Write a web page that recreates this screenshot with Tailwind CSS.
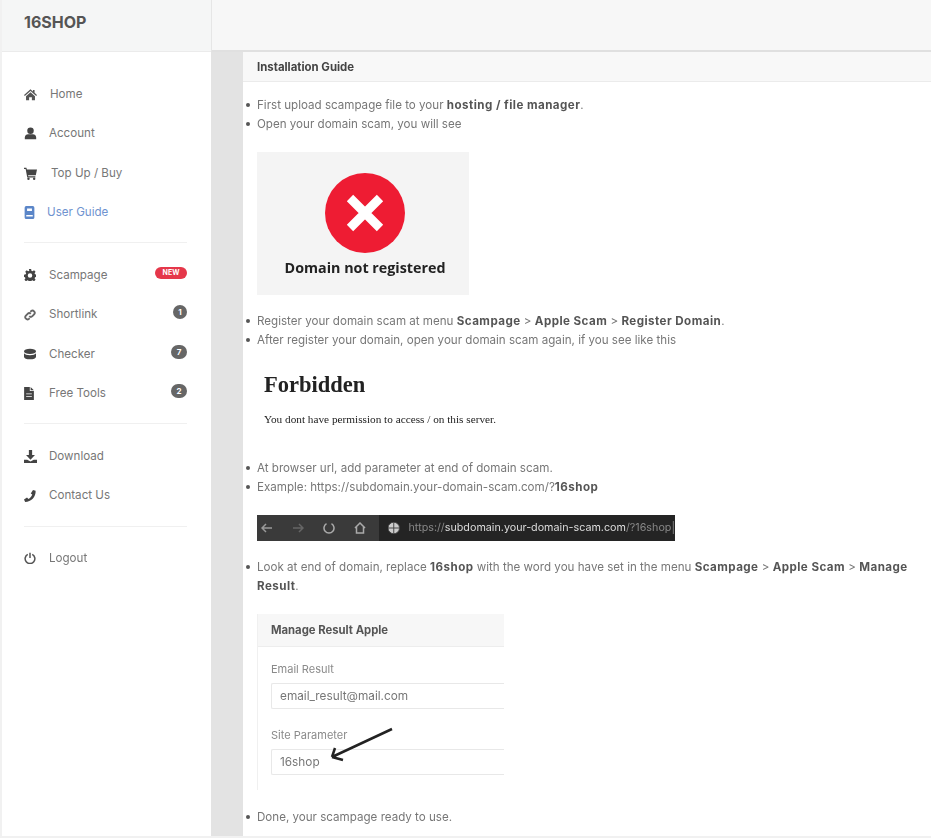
<!DOCTYPE html>
<html lang="en">
<head>
    <meta charset="UTF-8">
    <meta name="viewport" content="width=device-width, initial-scale=1.0">
    <title>16SHOP</title>
    <script src="https://cdn.jsdelivr.net/npm/@tailwindcss/browser@4"></script>
</head>
<body class="bg-[#f1f1f1] text-[#777] h-[838px] overflow-hidden font-['Inter','Liberation_Sans',sans-serif] text-[11.600px]">
    <div class="flex h-[838px] pl-[2px] pb-[2px] blur-[0.7px]">
        <!-- Sidebar -->
        <aside class="w-[209px] shrink-0 bg-white flex flex-col">
            <div class="h-[52px] shrink-0 bg-[#f5f6f6] border-b border-[#ebebeb] pl-[22px] pt-[12px] text-[16px] leading-[20px] font-bold text-[#555]">16SHOP</div>
            <nav class="pl-[22px] pr-[24px] pt-[22.500px]">
                <a class="flex items-center h-[39.5px]">
                    <svg class="w-[13px] h-[13px] mr-[13px] fill-[#555]" viewBox="0 0 16 16"><path d="M8 1.500 0 8.500l1 1.200 7-6 7 6 1-1.200-3-2.600V2.500h-2v1.700z"/><path d="M2.500 10 8 5.200l5.500 4.800v5H9.700v-3.500H6.300V15H2.500z"/></svg>
                    <span>Home</span>
                </a>
                <a class="flex items-center h-[39.5px]">
                    <svg class="w-[13px] h-[13px] mr-[12px] fill-[#444]" viewBox="0 0 16 16"><circle cx="8" cy="4.500" r="4"/><path d="M1 15v-2c0-2.500 2-4 4-4h6c2 0 4 1.500 4 4v2z"/></svg>
                    <span>Account</span>
                </a>
                <a class="flex items-center h-[39.5px]">
                    <svg class="w-[13px] h-[13px] mr-[14px] fill-[#444]" viewBox="0 0 16 16"><path d="M0 1h3l.5 2H16l-1.500 7H5l.3 1.500H14V13H4L2 2.500H0z"/><circle cx="5.500" cy="14.500" r="1.500"/><circle cx="12.500" cy="14.500" r="1.500"/></svg>
                    <span>Top Up / Buy</span>
                </a>
                <a class="flex items-center h-[39.5px] text-[#6f93cf]">
                    <svg class="w-[11px] h-[13px] mr-[12px] fill-[#5b86c8]" viewBox="0 0 12 16"><path d="M2 0h8a2 2 0 0 1 2 2v12a2 2 0 0 1-2 2H2a2 2 0 0 1-2-2V2a2 2 0 0 1 2-2zm1 3v3h6V3zm-1 8v2h8v-2z"/></svg>
                    <span>User Guide</span>
                </a>
                <div class="border-t border-[#f0f0f0] mt-[9px] mb-[13px]"></div>
                <a class="flex items-center h-[39.5px]">
                    <svg class="w-[12px] h-[12px] mr-[13px] fill-[#444]" viewBox="0 0 16 16"><path fill-rule="evenodd" d="M6.500 0h3l.4 2.300 1.500.6 2-1.300 2 2-1.300 2 .6 1.500 2.300.4v3l-2.300.4-.6 1.500 1.300 2-2 2-2-1.300-1.500.6-.4 2.300h-3l-.4-2.300-1.500-.6-2 1.300-2-2 1.300-2-.6-1.500L0 10.500v-3l2.300-.4.6-1.500-1.300-2 2-2 2 1.300 1.500-.6zM8 5.500a3 3 0 1 0 0 6 3 3 0 0 0 0-6z"/></svg>
                    <span class="flex-1">Scampage</span>
                    <span class="w-[32px] h-[12px] -mt-[5px] rounded-full bg-[#e5374a] text-white text-[7px] font-bold leading-[12px] text-center">NEW</span>
                </a>
                <a class="flex items-center h-[39.5px]">
                    <svg class="w-[12px] h-[12px] mr-[13px] fill-none stroke-[#666] stroke-[2.500]" viewBox="0 0 16 16"><path d="M7 9.500a3 3 0 0 0 4.200 0l2.500-2.500A3 3 0 0 0 9.500 2.800L8.500 3.800M9 6.500a3 3 0 0 0-4.200 0L2.300 9a3 3 0 0 0 4.200 4.200l1-1"/></svg>
                    <span class="flex-1">Shortlink</span>
                    <span class="w-[14px] h-[14px] -mt-[5px] rounded-full bg-[#666] text-white text-[8px] font-bold leading-[14px] text-center">1</span>
                </a>
                <a class="flex items-center h-[39.5px]">
                    <svg class="w-[12px] h-[12px] mr-[13px] fill-[#444]" viewBox="0 0 16 16"><ellipse cx="8" cy="4.500" rx="8" ry="3.500"/><path d="M0 7c1 1.700 4 2.500 8 2.500S15 8.700 16 7v4.500C16 13.500 12.500 15 8 15s-8-1.500-8-3.500z"/></svg>
                    <span class="flex-1">Checker</span>
                    <span class="w-[16px] h-[14px] -mt-[5px] rounded-full bg-[#666] text-white text-[8px] font-bold leading-[14px] text-center">7</span>
                </a>
                <a class="flex items-center h-[39.5px]">
                    <svg class="w-[10px] h-[13px] mr-[15px] fill-[#444]" viewBox="0 0 12 16"><path fill-rule="evenodd" d="M0 0h7v5h5v11H0zM8 0l4 4H8zM2.500 8v1h7V8zm0 3v1h7v-1z"/></svg>
                    <span class="flex-1">Free Tools</span>
                    <span class="w-[16px] h-[14px] -mt-[5px] rounded-full bg-[#666] text-white text-[8px] font-bold leading-[14px] text-center">2</span>
                </a>
                <div class="border-t border-[#f0f0f0] mt-[9.500px] mb-[12.500px]"></div>
                <a class="flex items-center h-[39.5px]">
                    <svg class="w-[13px] h-[13px] mr-[12px] fill-[#444]" viewBox="0 0 16 16"><path d="M6 0h4v6h3.500L8 12 2.500 6H6zM0 12h4l4 2 4-2h4v4H0z"/></svg>
                    <span>Download</span>
                </a>
                <a class="flex items-center h-[39.5px]">
                    <svg class="w-[12px] h-[12px] mr-[13px] fill-[#444]" viewBox="0 0 16 16"><path d="M12 0l3.500 1c.5 8-6 15-14 15L0 12.500 4 10l2 2c2-1 4-3.500 5-6L9 4.500z"/></svg>
                    <span>Contact Us</span>
                </a>
                <div class="border-t border-[#f0f0f0] mt-[10px] mb-[12px]"></div>
                <a class="flex items-center h-[39.5px]">
                    <svg class="w-[12px] h-[12px] mr-[13px] fill-none stroke-[#555] stroke-2" viewBox="0 0 16 16"><path d="M5 3.200a6.500 6.500 0 1 0 6 0M8 1v7"/></svg>
                    <span>Logout</span>
                </a>
            </nav>
        </aside>

        <!-- Main -->
        <main class="flex-1 flex flex-col min-w-0">
            <div class="h-[52px] shrink-0 bg-[#f7f7f7] border-l border-b-2 border-l-[#e6e6e6] border-b-[#e0e0e0]"></div>
            <div class="flex-1 flex min-h-0">
                <div class="w-[32px] shrink-0 bg-[#e3e3e3]"></div>
                <section class="flex-1 bg-white min-w-0">
                    <div class="h-[30px] bg-[#f8f8f8] border-b border-[#ebebeb] pl-[14px] leading-[30px] text-[11.400px] font-bold text-[#444]">Installation Guide</div>
                    <div class="pl-[14px] pr-[20px] pt-[13.500px] leading-[19px] [&_li]:relative [&_li]:before:absolute [&_li]:before:left-[-11px] [&_li]:before:top-[7px] [&_li]:before:size-[4px] [&_li]:before:rounded-full [&_li]:before:bg-[#555] [&_b]:text-[#555] [&_b]:tracking-[0.45px]">
                        <ul>
                            <li>First upload scampage file to your <b>hosting / file manager</b>.</li>
                            <li>Open your domain scam, you will see</li>
                        </ul>
                        <div class="w-[212px] h-[143px] mt-[18px] pl-[4px] bg-[#f4f4f4] flex flex-col items-center">
                            <div class="w-[80px] h-[80px] mt-[21px] rounded-full bg-[#ee1c33] flex items-center justify-center">
                                <svg class="w-[42px] h-[42px] stroke-white stroke-[9]" viewBox="0 0 42 42"><path d="M6 6l30 30M36 6 6 36"/></svg>
                            </div>
                            <p class="mt-[3px] font-['Open_Sans',sans-serif] font-bold text-[14.300px] leading-[24px] text-[#222]">Domain not registered</p>
                        </div>
                        <ul class="mt-[17px]">
                            <li>Register your domain scam at menu <b>Scampage</b> &gt; <b>Apple Scam</b> &gt; <b>Register Domain</b>.</li>
                            <li>After register your domain, open your domain scam again, if you see like this</li>
                        </ul>
                        <div class="pl-[7px] h-[109px] font-['Liberation_Serif',serif] text-[#222]">
                            <h2 class="pt-[21px] text-[22.500px] leading-[28px] font-bold">Forbidden</h2>
                            <p class="mt-[13px] text-[11.250px] leading-[14px]">You dont have permission to access / on this server.</p>
                        </div>
                        <ul>
                            <li>At browser url, add parameter at end of domain scam.</li>
                            <li>Example: https://subdomain.your-domain-scam.com/?<b>16shop</b></li>
                        </ul>
                        <div class="w-[418px] h-[26px] mt-[18px] bg-[#242424] flex items-center text-[#888] overflow-hidden">
                            <div class="w-[122px] h-full bg-[#3a3a3a] flex items-center gap-[19px] pl-[4px] shrink-0">
                                <svg class="w-[12px] h-[12px] fill-none stroke-[#999] stroke-[1.500]" viewBox="0 0 12 12"><path d="M11 6H1m4-4L1 6l4 4"/></svg>
                                <svg class="w-[12px] h-[12px] fill-none stroke-[#666] stroke-[1.500]" viewBox="0 0 12 12"><path d="M1 6h10M7 2l4 4-4 4"/></svg>
                                <svg class="w-[12px] h-[12px] fill-none stroke-[#aaa] stroke-[1.500]" viewBox="0 0 12 12"><path d="M8.500 1.700a5 5 0 1 1-5 0"/></svg>
                                <svg class="w-[12px] h-[12px] fill-none stroke-[#aaa] stroke-[1.500]" viewBox="0 0 12 12"><path d="M1 6l5-5 5 5M2.500 5v6h7V5"/></svg>
                            </div>
                            <svg class="w-[12px] h-[12px] ml-[9px] mr-[9px] fill-[#ccc] stroke-[#444]" viewBox="0 0 12 12"><circle cx="6" cy="6" r="6"/><path d="M0 6h12M6 0v12"/></svg>
                            <span class="text-[10.750px] whitespace-nowrap">https://<span class="text-[#ddd]">subdomain.your-domain-scam.com</span>/?16shop|</span>
                        </div>
                        <ul class="mt-[17px]">
                            <li>Look at end of domain, replace <b>16shop</b> with the word you have set in the menu <b>Scampage</b> &gt; <b>Apple Scam</b> &gt; <b>Manage Result</b>.</li>
                        </ul>
                        <div class="relative w-[247px] h-[176px] mt-[18px] border-l border-[#f0f0f0]">
                            <div class="h-[33px] bg-[#f7f7f7] border-b border-[#ededed] pl-[13px] leading-[32px] text-[11.300px] font-bold text-[#555]">Manage Result Apple</div>
                            <div class="pl-[13px]">
                                <p class="mt-[13px] leading-[18px] text-[11px] text-[#8a8a8a]">Email Result</p>
                                <div class="h-[26px] mt-[5px] border border-r-0 border-[#e8e8e8] rounded-l-[2px] pl-[8px] text-[11.800px] leading-[24px]">email_result@mail.com</div>
                                <p class="mt-[17px] leading-[18px] text-[11px] text-[#8a8a8a]">Site Parameter</p>
                                <div class="h-[26px] mt-[5px] border border-r-0 border-[#e8e8e8] rounded-l-[2px] pl-[8px] text-[11.800px] leading-[24px]">16shop</div>
                            </div>
                            <svg class="absolute left-[70px] top-[111px] w-[70px] h-[40px] fill-none stroke-[#222] stroke-[2.500]" viewBox="0 0 70 40"><path d="M64 4 4 32M4 32l3-9M4 32l11 3"/></svg>
                        </div>
                        <ul class="mt-[18px]">
                            <li>Done, your scampage ready to use.</li>
                        </ul>
                    </div>
                </section>
            </div>
        </main>
    </div>
</body>
</html>
